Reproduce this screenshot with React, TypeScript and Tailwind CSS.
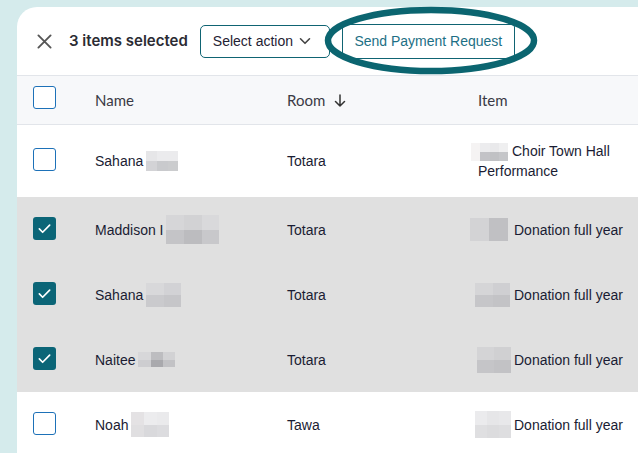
import React from "react";

type Blur = { w: string; h: string; grid: string; cells: string[] };

type Row = {
  first: string;
  blur: Blur;
  room: string;
  item: string;
  itemBlur: Blur;
  itemBlurGap: string;
  selected: boolean;
  tall?: boolean;
};

const rows: Row[] = [
  {
    first: "Sahana",
    blur: {
      w: "w-[32px]",
      h: "h-[20px]",
      grid: "grid-cols-3",
      cells: ["bg-[#e6e6e8]", "bg-[#ebebed]", "bg-[#ebebed]", "bg-[#d3d3d6]", "bg-[#c9cacd]", "bg-[#cbccce]"],
    },
    room: "Totara",
    item: "Choir Town Hall Performance",
    itemBlur: {
      w: "w-[37px]",
      h: "h-[18px]",
      grid: "grid-cols-4",
      cells: [
        "bg-[#f5f3f3]", "bg-[#ececee]", "bg-[#e9e9eb]", "bg-[#efeff0]",
        "bg-[#f5f3f3]", "bg-[#c3c3c7]", "bg-[#c0c1c4]", "bg-[#c5c6c9]",
      ],
    },
    itemBlurGap: "-ml-[7px] mr-[4px]",
    selected: false,
    tall: true,
  },
  {
    first: "Maddison I",
    blur: {
      w: "w-[53px]",
      h: "h-[29px]",
      grid: "grid-cols-3",
      cells: ["bg-[#d6d6d8]", "bg-[#d2d2d4]", "bg-[#d9d9db]", "bg-[#c4c4c7]", "bg-[#bcbcbf]", "bg-[#c8c8cb]"],
    },
    room: "Totara",
    item: "Donation full year",
    itemBlur: {
      w: "w-[38px]",
      h: "h-[23px]",
      grid: "grid-cols-2",
      cells: ["bg-[#d3d3d5]", "bg-[#c0c0c3]", "bg-[#d3d3d5]", "bg-[#c0c0c3]"],
    },
    itemBlurGap: "-ml-[8px] mr-[6px]",
    selected: true,
  },
  {
    first: "Sahana",
    blur: {
      w: "w-[35px]",
      h: "h-[24px]",
      grid: "grid-cols-2",
      cells: ["bg-[#d8d8da]", "bg-[#d2d2d5]", "bg-[#cacacd]", "bg-[#c6c6c9]"],
    },
    room: "Totara",
    item: "Donation full year",
    itemBlur: {
      w: "w-[35px]",
      h: "h-[24px]",
      grid: "grid-cols-2",
      cells: ["bg-[#d5d5d7]", "bg-[#cfcfd2]", "bg-[#c6c6c9]", "bg-[#c3c3c6]"],
    },
    itemBlurGap: "-ml-[3px] mr-[4px]",
    selected: true,
  },
  {
    first: "Naitee",
    blur: {
      w: "w-[37px]",
      h: "h-[15px]",
      grid: "grid-cols-3",
      cells: ["bg-[#d7d7d9]", "bg-[#bdbdc0]", "bg-[#d2d2d4]", "bg-[#cdcdd0]", "bg-[#a9a9ad]", "bg-[#c2c2c5]"],
    },
    room: "Totara",
    item: "Donation full year",
    itemBlur: {
      w: "w-[34px]",
      h: "h-[26px]",
      grid: "grid-cols-2",
      cells: ["bg-[#d4d4d6]", "bg-[#d0d0d2]", "bg-[#c5c5c8]", "bg-[#c2c2c5]"],
    },
    itemBlurGap: "-ml-[1px] mr-[3px]",
    selected: true,
  },
  {
    first: "Noah",
    blur: {
      w: "w-[38px]",
      h: "h-[25px]",
      grid: "grid-cols-3",
      cells: ["bg-[#e4e2e4]", "bg-[#ececee]", "bg-[#eaeaec]", "bg-[#e0dfe1]", "bg-[#d9d9dc]", "bg-[#dcdcdf]"],
    },
    room: "Tawa",
    item: "Donation full year",
    itemBlur: {
      w: "w-[36px]",
      h: "h-[27px]",
      grid: "grid-cols-3",
      cells: ["bg-[#ebebed]", "bg-[#e6e6e8]", "bg-[#e8e8ea]", "bg-[#dfdfe1]", "bg-[#dcdcde]", "bg-[#dedee0]"],
    },
    itemBlurGap: "-ml-[3px] mr-[3px]",
    selected: false,
  },
];

function Redacted({ blur, className }: { blur: Blur; className?: string }) {
  return (
    <span className={`inline-grid shrink-0 align-middle ${blur.grid} ${blur.w} ${blur.h} ${className ?? ""}`}>
      {blur.cells.map((c, i) => (
        <span key={i} className={c} />
      ))}
    </span>
  );
}

function Checkbox({ checked }: { checked: boolean }) {
  if (checked) {
    return (
      <div className="flex h-[23px] w-[23px] items-center justify-center rounded-[3px] bg-[#0b6577]">
        <svg width="15" height="15" viewBox="0 0 16 16" fill="none">
          <path d="M2.5 8.5l3.5 3.5 7.5-7.5" stroke="white" strokeWidth="1.8" strokeLinecap="round" strokeLinejoin="round" />
        </svg>
      </div>
    );
  }
  return <div className="h-[23px] w-[23px] rounded-[3px] border-[1.5px] border-[#1d71b8] bg-white" />;
}

export default function App() {
  return (
    <div className="relative h-[453px] w-[638px] overflow-hidden bg-[#d5ebec] pl-[17px] pt-[7px]">
      <div className="flex w-[680px] flex-col rounded-tl-[20px] bg-white">
        {/* selection toolbar */}
        <div className="flex h-[68px] items-center pl-[20px] font-['Liberation_Sans',Arial,sans-serif]">
          <svg width="15" height="15" viewBox="0 0 16 16" className="text-[#555]">
            <path d="M1.5 1.5l13 13M14.5 1.5l-13 13" stroke="currentColor" strokeWidth="2" strokeLinecap="round" />
          </svg>
          <span className="ml-[17px] font-['Inter',sans-serif] text-[15px] font-semibold text-[#2b2b33]">3 items selected</span>
          <button className="ml-[12px] flex h-[33px] w-[130px] items-center gap-[6px] rounded-[5px] border border-[#0f6473] pl-[12px] text-[14px] text-[#1f2233]">
            Select action
            <svg width="12" height="12" viewBox="0 0 12 12" fill="none">
              <path d="M1.5 3.8L6 8.3l4.5-4.5" stroke="#444" strokeWidth="1.6" strokeLinecap="round" strokeLinejoin="round" />
            </svg>
          </button>
          <button className="ml-[12px] h-[35px] w-[173px] rounded-[3px] border border-[#0f6473] text-[14px] text-[#1d6f85]">
            Send Payment Request
          </button>
        </div>

        {/* header */}
        <div className="flex h-[50px] items-center border-y border-[#e2e5ea] bg-[#f7f8fa] font-['Lato',sans-serif] text-[15px] text-[#3a3a45]">
          <div className="mb-[6px] w-[78px] pl-[16px]">
            <Checkbox checked={false} />
          </div>
          <div className="w-[192px]">Name</div>
          <div className="flex w-[191px] items-center gap-[9px]">
            Room
            <svg width="12" height="13" viewBox="0 0 12 13" fill="none">
              <path d="M6 1v11M1.5 7.5L6 12l4.5-4.5" stroke="#333" strokeWidth="1.5" strokeLinecap="round" strokeLinejoin="round" />
            </svg>
          </div>
          <div className="flex-1">Item</div>
        </div>

        {/* rows */}
        {rows.map((r, i) => (
          <div
            key={i}
            className={`flex items-center font-['Liberation_Sans',Arial,sans-serif] text-[14px] leading-[20px] text-[#1a1c33] ${
              r.tall ? "h-[72px]" : "h-[65px]"
            } ${r.selected ? "bg-[#e0e0e0]" : "bg-white"}`}
          >
            <div className="mb-[3px] w-[78px] pl-[16px]">
              <Checkbox checked={r.selected} />
            </div>
            <div className="flex w-[192px] items-center gap-[3px]">
              <span>{r.first}</span>
              <Redacted blur={r.blur} />
            </div>
            <div className="w-[191px]">{r.room}</div>
            <div className="flex-1 pr-[40px]">
              {r.tall ? (
                <div className="w-[150px]">
                  <Redacted blur={r.itemBlur} className={r.itemBlurGap} />
                  {r.item}
                </div>
              ) : (
                <div className="flex items-center">
                  <Redacted blur={r.itemBlur} className={r.itemBlurGap} />
                  <span>{r.item}</span>
                </div>
              )}
            </div>
          </div>
        ))}
      </div>

      {/* hand-drawn highlight around the button */}
      <svg className="pointer-events-none absolute left-[322px] top-[4px]" width="218" height="74" viewBox="0 0 218 74" fill="none">
        <ellipse cx="109" cy="36.5" rx="103" ry="30.5" stroke="#0b6570" strokeWidth="6.5" />
      </svg>
    </div>
  );
}
